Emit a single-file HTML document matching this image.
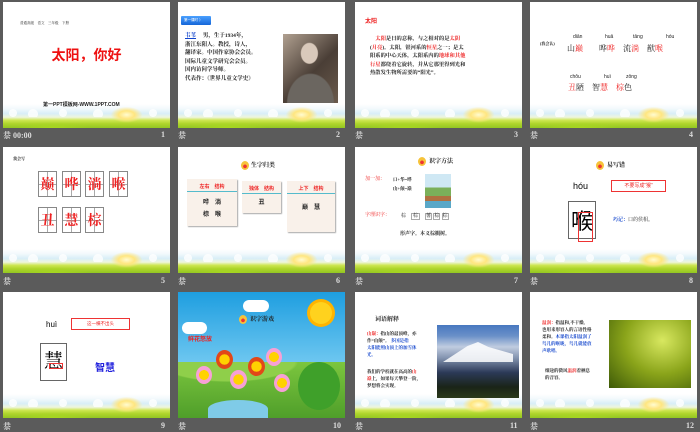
<!DOCTYPE html>
<html><head><meta charset="utf-8"><style>
*{margin:0;padding:0;box-sizing:border-box}
body{width:700px;height:431px;background:#5b5b5b;position:relative;overflow:hidden;font-family:"Liberation Sans","Noto Sans CJK SC",sans-serif}
.s{position:absolute;width:167px;height:126px;background:#fff;overflow:hidden}
.s>div{z-index:2}
.s>.land{z-index:1}
.land{position:absolute;left:0;bottom:0;width:100%;height:24px;
background:
radial-gradient(ellipse 16px 8px at 74% 45%,#fffbd0 0,#ffe680 50%,rgba(255,240,150,0) 100%),
radial-gradient(ellipse 40px 6px at 30% 100%,#a8d820 0,rgba(168,216,32,0) 100%),
linear-gradient(#fff 0,#f2f9fc 20%,#d8eef7 40%,#eef6dc 55%,#cde650 68%,#afd52c 82%,#92c622 100%)}
.land:after{content:"";position:absolute;left:0;right:0;top:5px;height:8px;background:radial-gradient(circle 4px at 10px 4px,#fff 98%,transparent),radial-gradient(circle 5px at 30px 5px,#fff 98%,transparent),radial-gradient(circle 4px at 60px 4px,#fff 98%,transparent),radial-gradient(circle 5px at 95px 5px,#fff 98%,transparent),radial-gradient(circle 4px at 150px 4px,#fff 98%,transparent);opacity:.8}
.cap{position:absolute;color:#ddd;font-size:8px;font-weight:bold;font-family:"Liberation Serif","Noto Serif CJK SC",serif}
.t{position:absolute;font-size:6px;line-height:8.5px;font-weight:bold;color:#222;white-space:nowrap;font-family:"Liberation Serif","Noto Serif CJK SC",serif}
.r{color:#e22}.b{color:#14c}
.ch{position:absolute;width:19px;height:26px;border:1px solid #888;color:#e22;font-size:14px;text-align:center;line-height:24px;font-weight:bold;font-family:"Noto Serif CJK SC",serif;background:linear-gradient(#aaa,#aaa) center/1px 100% no-repeat,linear-gradient(#aaa,#aaa) center/100% 1px no-repeat}
.note{position:absolute;background:#f9f1ea;box-shadow:1px 1px 1px #aaa;font-size:5px;color:#222;text-align:center;font-weight:bold}
.ic{position:absolute;width:8px;height:9px;border-radius:50%;background:radial-gradient(circle at 50% 60%,#e33 0 25%,#f6c33a 30%)}
</style></head><body>

<!-- slide 1 -->
<div class="s" style="left:3px;top:2px">
 <div class="land"></div>
 <div class="t" style="left:17px;top:17px;font-size:3.5px;font-weight:normal">普通高级　语文　三年级　下册</div>
 <div style="position:absolute;left:0;width:100%;top:43px;text-align:center;color:#e11;font-size:14px;font-weight:bold;font-family:'Noto Sans CJK SC',sans-serif">太阳，你好</div>
 <div class="t" style="left:40px;top:99px;font-size:5px;font-family:'Liberation Sans','Noto Sans CJK SC',sans-serif">第一PPT模板网-WWW.1PPT.COM</div>
</div>
<div class="cap" style="left:3px;top:130px">㳟 00:00</div><div class="cap" style="left:161px;top:130px">1</div>

<!-- slide 2 -->
<div class="s" style="left:178px;top:2px">
 <div class="land"></div>
 <div style="position:absolute;left:3px;top:14px;width:30px;height:9px;background:linear-gradient(#4aa0ff,#1566d8);border-radius:1px;color:#fff;font-size:3.5px;line-height:9px;padding-left:3px">第一课时 〉</div>
 <div class="t" style="left:7px;top:30px;font-size:5.5px;line-height:8.5px"><span class="b" style="text-decoration:underline">韦苇</span>　 男，生于1934年，<br>浙江东阳人。教授，诗人，<br>翻译家。中国作家协会会员。<br>国际儿童文学研究会会员。<br>国内访问学导师。<br>代表作：《世界儿童文学史》</div>
 <div style="position:absolute;left:105px;top:32px;width:55px;height:69px;background:radial-gradient(ellipse 9px 11px at 48% 28%,#d9c9bb 90%,transparent),radial-gradient(ellipse 24px 30px at 50% 100%,#6b6660 95%,transparent),linear-gradient(135deg,#b0a090,#4a3e36 55%,#6a5a4c)"></div>
</div>
<div class="cap" style="left:178px;top:130px">㳟</div><div class="cap" style="left:336px;top:130px">2</div>

<!-- slide 3 -->
<div class="s" style="left:355px;top:2px">
 <div class="land"></div>
 <div class="t r" style="left:10px;top:15px;font-size:6px;font-family:'Noto Sans CJK SC',sans-serif">太阳</div>
 <div class="t" style="left:15px;top:33px;font-size:5.3px;line-height:8.5px">　<span class="r">太阳</span>是日的意称，与之相对的是<span class="r">太阴</span><br>(<span class="r">月亮</span>)。太阳，银河系的<span class="r">恒星</span>之一；是太<br>阳系的中心天体，太阳系内的<span class="r">地球和其他</span><br><span class="r">行星</span>都绕着它旋转，并从它那里得到光和<br>热散发生物所需要的“阳光”。</div>
</div>
<div class="cap" style="left:355px;top:130px">㳟</div><div class="cap" style="left:514px;top:130px">3</div>

<!-- slide 4 -->
<div class="s" style="left:530px;top:2px">
 <div class="land"></div>
 <div class="t" style="left:10px;top:38px;font-size:4px">(我会认)</div>
 <div class="t" style="left:43px;top:31px;font-size:5px;font-weight:normal;font-family:'Liberation Sans',sans-serif">diān</div>
 <div class="t" style="left:75px;top:31px;font-size:5px;font-weight:normal;font-family:'Liberation Sans',sans-serif">huā</div>
 <div class="t" style="left:103px;top:31px;font-size:5px;font-weight:normal;font-family:'Liberation Sans',sans-serif">tāng</div>
 <div class="t" style="left:136px;top:31px;font-size:5px;font-weight:normal;font-family:'Liberation Sans',sans-serif">hóu</div>
 <div class="t" style="left:37px;top:42px;font-size:8px;line-height:10px;font-weight:normal">山<span class="r">巅</span>　　哗<span class="r">哗</span>　流<span class="r">淌</span>　猷<span class="r">喉</span></div>
 <div class="t" style="left:40px;top:71px;font-size:5px;font-weight:normal;font-family:'Liberation Sans',sans-serif">chǒu</div>
 <div class="t" style="left:74px;top:71px;font-size:5px;font-weight:normal;font-family:'Liberation Sans',sans-serif">huì</div>
 <div class="t" style="left:96px;top:71px;font-size:5px;font-weight:normal;font-family:'Liberation Sans',sans-serif">zōng</div>
 <div class="t" style="left:38px;top:81px;font-size:8px;line-height:10px;font-weight:normal"><span class="r">丑</span>陋　智<span class="r">慧</span>　<span class="r">棕</span>色</div>
</div>
<div class="cap" style="left:530px;top:130px">㳟</div><div class="cap" style="left:689px;top:130px">4</div>

<!-- slide 5 -->
<div class="s" style="left:3px;top:147px">
 <div class="land"></div>
 <div class="t" style="left:10px;top:8px;font-size:4px">我会写</div>
 <div class="ch" style="left:35px;top:24px">巅</div>
 <div class="ch" style="left:59px;top:24px">哗</div>
 <div class="ch" style="left:82px;top:24px">淌</div>
 <div class="ch" style="left:106px;top:24px">喉</div>
 <div class="ch" style="left:35px;top:60px">丑</div>
 <div class="ch" style="left:59px;top:60px">慧</div>
 <div class="ch" style="left:82px;top:60px">棕</div>
</div>
<div class="cap" style="left:3px;top:276px">㳟</div><div class="cap" style="left:161px;top:276px">5</div>

<!-- slide 6 -->
<div class="s" style="left:178px;top:147px">
 <div class="land"></div>
 <div class="ic" style="left:63px;top:14px"></div>
 <div class="t" style="left:73px;top:15px;font-size:6px">生字归类</div>
 <div class="note" style="left:9px;top:32px;width:50px;height:47px"><div class="r" style="margin-top:4px;border-bottom:1px solid #5bc;padding-bottom:1px">左右　结构</div><div style="font-size:6px;margin-top:5px;line-height:12px">哗　淌<br>棕　喉</div></div>
 <div class="note" style="left:64px;top:34px;width:39px;height:32px"><div class="r" style="margin-top:4px;border-bottom:1px solid #5bc;padding-bottom:1px">独体　结构</div><div style="font-size:6px;margin-top:3px">丑</div></div>
 <div class="note" style="left:109px;top:34px;width:48px;height:51px"><div class="r" style="margin-top:4px;border-bottom:1px solid #5bc;padding-bottom:1px">上下　结构</div><div style="font-size:6px;margin-top:8px">巅　慧</div></div>
</div>
<div class="cap" style="left:178px;top:276px">㳟</div><div class="cap" style="left:336px;top:276px">6</div>

<!-- slide 7 -->
<div class="s" style="left:355px;top:147px">
 <div class="land"></div>
 <div class="ic" style="left:63px;top:10px"></div>
 <div class="t" style="left:74px;top:11px;font-size:6px">识字方法</div>
 <div class="t r" style="left:10px;top:29px;font-size:5px;font-weight:normal">加一加：</div>
 <div class="t" style="left:38px;top:29px;font-size:4.5px">口+华=哗<br>山+颠=巅</div>
 <div style="position:absolute;left:70px;top:27px;width:26px;height:34px;background:linear-gradient(#cfe8f4 0 40%,#7bb05a 40% 65%,#b07040 65% 80%,#5aa8c8 80%)"></div>
 <div class="t r" style="left:10px;top:65px;font-size:5px;font-weight:normal">字理识字：</div>
 <div class="t" style="left:46px;top:66px;font-size:5px;font-weight:normal">棕　<span style="border:1px solid #aaa;padding:0 1px">棕</span>　<span style="border:1px solid #aaa">薯</span> <span style="border:1px solid #aaa">棕</span> <span style="border:1px solid #aaa">棕</span></div>
 <div class="t" style="left:45px;top:84px;font-size:5px">形声字。本义棕榈树。</div>
</div>
<div class="cap" style="left:355px;top:276px">㳟</div><div class="cap" style="left:514px;top:276px">7</div>

<!-- slide 8 -->
<div class="s" style="left:530px;top:147px">
 <div class="land"></div>
 <div class="ic" style="left:66px;top:14px"></div>
 <div class="t" style="left:77px;top:15px;font-size:6px">易写错</div>
 <div style="position:absolute;left:43px;top:34px;font-size:9px;font-family:'Liberation Sans',sans-serif">hóu</div>
 <div style="position:absolute;left:81px;top:33px;width:55px;height:12px;border:1px solid #e33;color:#e22;font-size:5px;line-height:10px;text-align:center">不要写成“猴”</div>
 <div style="position:absolute;left:38px;top:54px;width:28px;height:38px;border:1px solid #666;font-size:22px;line-height:36px;text-align:center;font-family:'Noto Sans CJK SC',sans-serif">喉</div>
 <div style="position:absolute;left:48px;top:65px;width:15px;height:30px;border:1px solid #e33"></div>
 <div class="t" style="left:83px;top:70px;font-size:5px;font-weight:normal"><span class="b" style="font-weight:bold">巧记：</span>口的侯相。</div>
</div>
<div class="cap" style="left:530px;top:276px">㳟</div><div class="cap" style="left:689px;top:276px">8</div>

<!-- slide 9 -->
<div class="s" style="left:3px;top:292px">
 <div class="land"></div>
 <div style="position:absolute;left:43px;top:28px;font-size:8px;font-family:'Liberation Sans',sans-serif">huì</div>
 <div style="position:absolute;left:68px;top:26px;width:59px;height:12px;border:1px solid #e33;color:#e22;font-size:4.5px;line-height:10px;text-align:center">这一横不出头</div>
 <div style="position:absolute;left:37px;top:51px;width:27px;height:38px;border:1px solid #666;font-size:19px;line-height:32px;text-align:center;font-family:'Noto Serif CJK SC',serif">慧</div>
 <div style="position:absolute;left:46px;top:71px;width:14px;height:6px;border:1px solid #e33"></div>
 <div style="position:absolute;left:92px;top:67px;color:#22d;font-size:10px;font-weight:bold;font-family:'Noto Sans CJK SC',sans-serif">智慧</div>
</div>
<div class="cap" style="left:3px;top:421px">㳟</div><div class="cap" style="left:161px;top:421px">9</div>

<!-- slide 10 -->
<div class="s" style="left:178px;top:292px;background:linear-gradient(#1e9ee0,#6cc6f0 55%,#a9dff5 62%)">
 <div style="position:absolute;left:0;top:70px;width:100%;height:56px;background:radial-gradient(ellipse 70px 20px at 30% 0,#8fcf4a 95%,transparent),linear-gradient(#7cc63e,#4f9e2a)"></div>
 <div style="position:absolute;left:30px;top:108px;width:60px;height:18px;background:#7fcbe8;border-radius:50% 50% 0 0"></div>
 <div style="position:absolute;left:120px;top:70px;width:42px;height:48px;border-radius:50%;background:#3fa02a"></div>
 <div style="position:absolute;left:132px;top:10px;width:22px;height:22px;border-radius:50%;background:#ffd21e;box-shadow:0 0 0 3px #ffb400"></div>
 <div style="position:absolute;left:4px;top:30px;width:25px;height:12px;border-radius:6px;background:#fff"></div>
 <div style="position:absolute;left:65px;top:8px;width:26px;height:12px;border-radius:6px;background:#fff"></div>
 <div class="ic" style="left:61px;top:23px"></div>
 <div class="t" style="left:72px;top:24px;font-size:6px">识字游戏</div>
 <div class="t r" style="left:10px;top:43px;font-size:6px;font-family:'Noto Sans CJK SC',sans-serif">鲜花怒放</div>
 <div style="position:absolute;left:18px;top:74px;width:16px;height:18px;border-radius:50%;background:radial-gradient(circle,#ffd200 40%,#f7a0d6 42%)"></div>
 <div style="position:absolute;left:38px;top:58px;width:17px;height:19px;border-radius:50%;background:radial-gradient(circle,#ffd200 40%,#e24818 42%)"></div>
 <div style="position:absolute;left:52px;top:78px;width:17px;height:19px;border-radius:50%;background:radial-gradient(circle,#ffd200 40%,#f7a0d6 42%)"></div>
 <div style="position:absolute;left:70px;top:65px;width:17px;height:19px;border-radius:50%;background:radial-gradient(circle,#ffd200 40%,#e24818 42%)"></div>
 <div style="position:absolute;left:88px;top:56px;width:16px;height:18px;border-radius:50%;background:radial-gradient(circle,#ffd200 40%,#f7a0d6 42%)"></div>
 <div style="position:absolute;left:96px;top:82px;width:16px;height:18px;border-radius:50%;background:radial-gradient(circle,#ffd200 40%,#f7a0d6 42%)"></div>
</div>
<div class="cap" style="left:178px;top:421px">㳟</div><div class="cap" style="left:333px;top:421px">10</div>

<!-- slide 11 -->
<div class="s" style="left:355px;top:292px">
 <div class="land"></div>
 <div class="t" style="left:20px;top:24px;font-size:6px">词语解释</div>
 <div class="t" style="left:12px;top:38px;font-size:4.5px;line-height:7px"><span class="r">山巅：</span>指山的最顶峰，亦<br>作“山颠”。 <span class="b">多国是指</span><br><span class="b">太阳能照山顶上的加雪体</span><br><span class="b">光。</span></div>
 <div class="t" style="left:12px;top:76px;font-size:4.5px;line-height:7px">我们的学校就在高高的<span class="r">山</span><br><span class="r">巅</span>上，如果每天攀登一阶，<br>梦想将会实现。</div>
 <div style="position:absolute;left:82px;top:33px;width:82px;height:73px;background:linear-gradient(#4878c0 0,#6a90c8 15%,#c0cce0 30%,#8494b0 45%,#2c3a58 65%,#1a2418 85%,#2a3a1a)"></div>
 <div style="position:absolute;left:88px;top:50px;width:70px;height:20px;background:#fff;clip-path:polygon(0 100%,35% 20%,50% 0,65% 25%,100% 60%,100% 100%);opacity:.85"></div>
</div>
<div class="cap" style="left:355px;top:421px">㳟</div><div class="cap" style="left:510px;top:421px">11</div>

<!-- slide 12 -->
<div class="s" style="left:530px;top:292px">
 <div class="land"></div>
 <div class="t" style="left:12px;top:27px;font-size:4.5px;line-height:7px"><span class="r">温润：</span>指温和,不干燥,<br>也用来形容人的言语性格<br>柔和。<span class="b">本课指太阳温润了</span><br><span class="b">鸟儿的喉咙，鸟儿就能放</span><br><span class="b">声歌唱。</span></div>
 <div class="t" style="left:15px;top:75px;font-size:4.5px;line-height:7px">细途的微风<span class="r">温润</span>着栖息<br>的音容。</div>
 <div style="position:absolute;left:79px;top:28px;width:82px;height:68px;background:radial-gradient(ellipse at 65% 30%,#d8e860,#8aa41a 50%,#3e5a08)"></div>
</div>
<div class="cap" style="left:530px;top:421px">㳟</div><div class="cap" style="left:686px;top:421px">12</div>

</body></html>
